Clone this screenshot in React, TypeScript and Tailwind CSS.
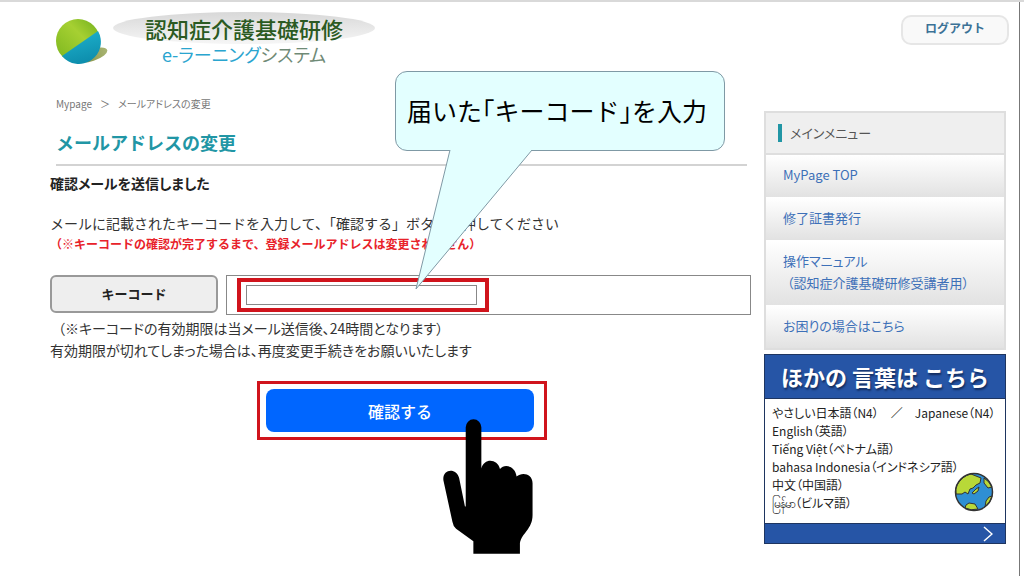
const menu = [
  { label: 'MyPage TOP' },
  { label: '修了証書発行' },
  { label: '操作マニュアル', note: '（認知症介護基礎研修受講者用）' },
  { label: 'お困りの場合はこちら' },
];

const languages = [
  'やさしい日本語（N4）　／　Japanese（N4）',
  'English（英語）',
  'Tiếng Việt（ベトナム語）',
  'bahasa Indonesia（インドネシア語）',
  '中文（中国語）',
  'မြန်မာ（ビルマ語）',
];

function Logo() {
  return (
    <div className="flex items-start gap-1">
      <svg viewBox="0 0 54 46" className="mt-[6px] h-[46px] w-[54px] shrink-0" aria-hidden="true">
        <defs>
          <linearGradient id="leaf" x1="0" y1="1" x2="1" y2="0">
            <stop offset="0" stopColor="#7ab51d" />
            <stop offset="0.6" stopColor="#a6d032" />
            <stop offset="1" stopColor="#6fae1c" />
          </linearGradient>
          <linearGradient id="sea" x1="0" y1="0" x2="0.3" y2="1">
            <stop offset="0" stopColor="#1fb4cf" />
            <stop offset="1" stopColor="#0e8fae" />
          </linearGradient>
          <linearGradient id="shade" x1="0" y1="0" x2="1" y2="0">
            <stop offset="0" stopColor="#7f8a3a" />
            <stop offset="1" stopColor="#a9b573" />
          </linearGradient>
        </defs>
        <ellipse cx="37" cy="37" rx="16" ry="6" fill="url(#shade)" transform="rotate(-18 37 37)" />
        <circle cx="23" cy="23" r="22" fill="url(#leaf)" />
        <path d="M7 38 L43 13 A22 22 0 0 1 7 38Z" fill="url(#sea)" />
      </svg>
      <div className="flex w-[262px] flex-col items-center">
        <div className="flex h-8 w-full items-center justify-center rounded-[50%] bg-linear-to-b from-[#d8d8d8] to-[#f6f6f6]">
          <span className="text-[22px] leading-6 font-medium whitespace-nowrap text-[#2b5a22]">認知症介護基礎研修</span>
        </div>
        <span className="text-[18px] leading-5 whitespace-nowrap text-[#6f8a76] [font-feature-settings:'palt']">
          <span className="text-[#2aa5cf]">e-ラーニング</span>システム
        </span>
      </div>
    </div>
  );
}

function Callout() {
  return (
    <div className="absolute top-[-23px] left-[345px] z-10 w-[330px]">
      <div className="flex h-20 items-center rounded-xl border border-[#7f99a5] bg-[#e3ffff] pl-[11px] text-[25px] whitespace-nowrap text-black [font-feature-settings:'halt']">
        届いた「キーコード」を入力
      </div>
      <svg viewBox="0 0 140 141" className="absolute top-[78px] left-5 h-[141px] w-[140px]" aria-hidden="true">
        <path d="M35 0 V1 L1 140 L117 1 V0Z" fill="#e3ffff" />
        <path d="M35 1 L1 140 L117 1" fill="none" stroke="#7f99a5" />
      </svg>
    </div>
  );
}

function Hand() {
  return (
    <svg viewBox="579 147 270 406" className="pointer-events-none absolute top-[35px] left-[183px] h-[135px] w-[90px]" aria-hidden="true">
      <path d="M647 172a23.5 24 0 0 1 47 0V296C702 264 742 266 750 297C764 280 796 288 800 320C816 305 848 311 848 340V436C848 478 816 490 810 520V552H670V515L618 477Q609 469 607 456L580 332C575 296 619 292 627 324L645 412L647 408Z" />
    </svg>
  );
}

function Globe() {
  return (
    <svg viewBox="0 0 40 40" className="h-10 w-10" aria-hidden="true">
      <circle cx="20" cy="20" r="18.5" fill="#2f8fd3" />
      <g fill="#b8d838" stroke="#333" strokeWidth="1">
        <path d="M3 13Q8 4 17 2L22 4L27 6L26 11L22 13L19 16L16 17L14 22L11 20L8 22L2 22Q1 17 3 13Z" />
        <path d="M30 6Q35 9 38 15L34 16L30 11Z" />
        <path d="M12 33L15 31L21 32L24 37Q17 39 11 36Z" />
        <path d="M38 24Q37 30 31 35L32 29L35 25Z" />
        <path d="M18 21L22 17L25 15L24 19L20 22Z" />
      </g>
      <circle cx="20" cy="20" r="18.5" fill="none" stroke="#333" strokeWidth="1.5" />
    </svg>
  );
}

function Sidebar() {
  return (
    <aside className="mt-[17px] w-[242px] shrink-0">
      <nav className="border-2 border-[#dedede] [font-feature-settings:'palt']">
        <h2 className="flex h-[42px] items-center gap-2 border-b-2 border-[#dedede] bg-[#efefef] pl-3 text-[13px] text-[#555]">
          <span className="h-[18px] w-1 bg-[#2196a5]" />
          メインメニュー
        </h2>
        <ul>
          {menu.map((item) => (
            <li key={item.label} className="border-b border-white bg-linear-to-b from-white to-[#e2e2e2] last:border-b-0">
              <a href="#" className="block px-[17px] pt-[9px] pb-[11px] text-[13px] leading-[22px] whitespace-nowrap text-[#3d70b8]">
                {item.label}
                {item.note && <span className="block pl-1">{item.note}</span>}
              </a>
            </li>
          ))}
        </ul>
      </nav>
      <a href="#" className="mt-1 block border border-[#1e3560] bg-white text-[#222]">
        <span className="flex h-11 items-center justify-center border-b border-[#1e3560] bg-[#2655a6] text-[22px] font-bold whitespace-nowrap text-white [text-shadow:1px_2px_2px_#122c5e]">
          ほかの 言葉は こちら
        </span>
        <span className="relative block px-[7px] pt-[5px] pb-[11px] [font-feature-settings:'palt']">
          {languages.map((name) => (
            <span key={name} className="block text-[12px] leading-[18px] whitespace-nowrap">
              {name}
            </span>
          ))}
          <span className="absolute right-[11px] bottom-[11px]">
            <Globe />
          </span>
        </span>
        <span className="flex h-5 items-center justify-end border-t border-[#1e3560] bg-[#2655a6] pr-3">
          <svg viewBox="0 0 10 16" className="h-4 w-[10px]" fill="none" stroke="#fff" strokeWidth="1.5" aria-hidden="true">
            <path d="M1 1L9 8L1 15" />
          </svg>
        </span>
      </a>
    </aside>
  );
}

export default function App() {
  return (
    <div className="min-h-screen border-t-2 border-[#d9d9d9] bg-white pr-1 font-['Noto_Sans_CJK_JP',sans-serif]">
      <div className="min-h-[574px] border-r border-[#777] pr-[13px]">
        <header className="flex h-[92px] items-start justify-between pt-[10px] pl-[55px]">
          <Logo />
          <button className="mt-[3px] mr-[-3px] h-[30px] w-[108px] rounded-[10px] border-2 border-[#e6e6e6] bg-[#f9f9f9] pb-1 text-[12px] font-bold text-[#3c7296]">
            ログアウト
          </button>
        </header>

        <div className="flex gap-[13px] pl-[50px]">
          <main className="relative min-w-0 flex-1 text-[14px] text-[#333]">
            <nav className="flex h-[18px] items-center gap-2 pl-[6px] text-[10px] text-[#777] [font-feature-settings:'palt']">
              <a href="#">Mypage</a>
              <span>＞</span>
              <span>メールアドレスの変更</span>
            </nav>
            <h1 className="mt-4 mr-1 ml-[6px] border-b-2 border-[#d3d3d3] pb-2 text-[18px] leading-7 font-bold text-[#2196a5]">
              メールアドレスの変更
            </h1>
            <p className="mt-[6px] leading-[22px] font-bold text-[#222] [font-feature-settings:'palt']">
              確認メールを送信しました
            </p>
            <p className="mt-[18px] leading-[22px] whitespace-nowrap">
              メールに記載されたキーコードを入力して、「確認する」ボタンを押してください
            </p>
            <p className="text-[12px] leading-5 font-bold whitespace-nowrap text-[#e8222a]">
              （※キーコードの確認が完了するまで、登録メールアドレスは変更されません）
            </p>

            <form>
              <div className="mt-[21px] flex items-start gap-2">
                <label
                  htmlFor="keycode"
                  className="flex h-[38px] w-[168px] shrink-0 items-center justify-center rounded-md border-2 border-[#999] bg-[#eee] text-[13px] font-bold text-[#222]"
                >
                  キーコード
                </label>
                <div className="flex h-10 flex-1 items-center border border-[#888] pl-[10px]">
                  <div className="border-4 border-[#d0141c] py-[3px] pr-2 pl-[5px]">
                    <input id="keycode" type="text" className="block h-5 w-[231px] border border-[#888] bg-white px-1" />
                  </div>
                </div>
              </div>
              <div className="mt-[2px] leading-[22px] [font-feature-settings:'palt']">
                <p className="pl-2">（※キーコードの有効期限は当メール送信後、24時間となります）</p>
                <p>有効期限が切れてしまった場合は、再度変更手続きをお願いいたします</p>
              </div>

              <div className="relative mt-5 ml-[207px] w-[290px] border-[3px] border-[#d0141c] py-[5px] pr-[10px] pl-[6px]">
                <button type="button" className="block h-[43px] w-full rounded-lg bg-[#0066ff] text-[16px] font-medium text-white">
                  確認する
                </button>
                <Hand />
              </div>
            </form>

            <Callout />
          </main>
          <Sidebar />
        </div>
      </div>
    </div>
  );
}
